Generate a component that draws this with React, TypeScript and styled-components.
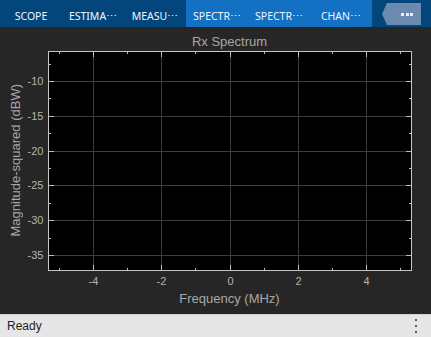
import React from 'react';
import styled, { createGlobalStyle } from 'styled-components';

const GlobalStyle = createGlobalStyle`
  html, body {
    margin: 0;
    padding: 0;
    height: 100%;
    background: #262626;
    overflow: hidden;
  }
  #root {
    height: 100%;
  }
`;

const Window = styled.div`
  display: flex;
  flex-direction: column;
  height: 100vh;
  width: 100vw;
  font-family: 'Liberation Sans', Arial, sans-serif;
`;

const Toolstrip = styled.div`
  display: flex;
  align-items: stretch;
  flex: 0 0 27px;
  background: #02467c;
`;

const TabGroup = styled.div<{ $active?: boolean }>`
  display: flex;
  background: ${(p) => (p.$active ? '#1370c3' : 'transparent')};
`;

const Tab = styled.div`
  width: 62px;
  box-sizing: border-box;
  padding-top: 5px;
  display: flex;
  align-items: center;
  justify-content: center;
  font-family: 'Noto Sans', 'Open Sans', sans-serif;
  font-size: 10.5px;
  color: #f2f6fa;
  white-space: nowrap;
`;

const OverflowButton = styled.button`
  align-self: flex-start;
  margin: 3px 10px 0 auto;
  width: 39px;
  height: 22px;
  border: 0;
  padding: 0 0 0 11px;
  background: #6a8bae;
  clip-path: polygon(0 50%, 5px 0, 100% 0, 100% 100%, 5px 100%);
  display: flex;
  align-items: center;
  justify-content: center;
  gap: 1.5px;
`;

const ButtonDot = styled.span`
  width: 3px;
  height: 3px;
  background: #e9eef4;
`;

const Figure = styled.main`
  flex: 1;
  display: flex;
  flex-direction: column;
  background: #262626;
  color: #a8a8a8;
  font-size: 13px;
`;

const Title = styled.div`
  height: 23px;
  box-sizing: border-box;
  padding: 0 20px 1px 48px;
  display: flex;
  align-items: flex-end;
  justify-content: center;
  line-height: 15px;
`;

const PlotRow = styled.div`
  display: flex;
  height: 240px;
`;

const YLabelCell = styled.div`
  width: 23px;
  box-sizing: border-box;
  padding: 1px 0 20px 0;
  display: flex;
  align-items: center;
  justify-content: flex-end;
`;

const YLabel = styled.div`
  writing-mode: vertical-rl;
  transform: rotate(180deg);
  line-height: 15px;
  white-space: nowrap;
`;

const Chart = styled.svg`
  display: block;
  font-family: 'Liberation Sans', Arial, sans-serif;
`;

const XLabel = styled.div`
  height: 24px;
  box-sizing: border-box;
  padding: 1px 20px 0 48px;
  display: flex;
  justify-content: center;
  line-height: 15px;
`;

const StatusBar = styled.footer`
  flex: 0 0 23px;
  box-sizing: border-box;
  border-top: 1px solid #d2d2d2;
  background: #e6e6e6;
  display: flex;
  align-items: center;
  justify-content: space-between;
  padding: 0 14px 0 7px;
  font-size: 12px;
  color: #1f1f1f;
`;

const MenuDots = styled.div`
  display: flex;
  flex-direction: column;
  gap: 3.5px;
`;

const MenuDot = styled.span`
  width: 2.5px;
  height: 2.5px;
  background: #5a5a5a;
`;

// axes geometry (svg-local pixels, svg sits at page x=23, y=50)
const LEFT = 25;
const RIGHT = 388;
const TOP = 1;
const BOTTOM = 220;

const xPos = (v: number) => Math.floor(207 + v * 34.15);
const yPos = (v: number) => Math.floor(31.5 + (-10 - v) * 6.96);

const xMajor = [-4, -2, 0, 2, 4];
const xMinor = [-5, -3, -1, 1, 3, 5];
const yMajor = [-10, -15, -20, -25, -30, -35];
const yMinor = [-7.5, -12.5, -17.5, -22.5, -27.5, -32.5];

const GRID = '#3d3d3d';
const TICK = '#bdbdbd';

const SpectrumAxes: React.FC = () => (
  <Chart width={408} height={240} viewBox="0 0 408 240">
    <rect x={LEFT} y={TOP} width={RIGHT - LEFT} height={BOTTOM - TOP} fill="#000" />
    {xMajor.map((v) => (
      <line key={`gx${v}`} x1={xPos(v) + 0.5} x2={xPos(v) + 0.5} y1={TOP} y2={BOTTOM} stroke={GRID} />
    ))}
    {yMajor.map((v) => (
      <line key={`gy${v}`} x1={LEFT} x2={RIGHT} y1={yPos(v) + 0.5} y2={yPos(v) + 0.5} stroke={GRID} />
    ))}
    {xMajor.concat(xMinor).map((v) => {
      const len = xMajor.includes(v) ? 6 : 3;
      const x = xPos(v) + 0.5;
      return (
        <g key={`tx${v}`} stroke={TICK}>
          <line x1={x} x2={x} y1={TOP} y2={TOP + len} />
          <line x1={x} x2={x} y1={BOTTOM + 1} y2={BOTTOM + 1 - len} />
        </g>
      );
    })}
    {yMajor.concat(yMinor).map((v) => {
      const len = yMajor.includes(v) ? 6 : 3;
      const y = yPos(v) + 0.5;
      return (
        <g key={`ty${v}`} stroke={TICK}>
          <line x1={LEFT} x2={LEFT + len} y1={y} y2={y} />
          <line x1={RIGHT + 1} x2={RIGHT + 1 - len} y1={y} y2={y} />
        </g>
      );
    })}
    <rect
      x={LEFT + 0.5}
      y={TOP + 0.5}
      width={RIGHT - LEFT}
      height={BOTTOM - TOP}
      fill="none"
      stroke="#c6c6c6"
    />
    {yMajor.map((v) => (
      <text key={`ly${v}`} x={20.5} y={yPos(v) + 4} textAnchor="end" fontSize={11} fill="#b4b4b4">
        {v}
      </text>
    ))}
    {xMajor.map((v) => (
      <text key={`lx${v}`} x={xPos(v) + 0.5} y={235} textAnchor="middle" fontSize={11} fill="#b4b4b4">
        {v}
      </text>
    ))}
  </Chart>
);

const tabs = [
  { label: 'SCOPE', group: 0 },
  { label: 'ESTIMA⋯', group: 0 },
  { label: 'MEASU⋯', group: 0 },
  { label: 'SPECTR⋯', group: 1 },
  { label: 'SPECTR⋯', group: 1 },
  { label: 'CHAN⋯', group: 1 },
];

export default function App() {
  return (
    <Window>
      <GlobalStyle />
      <Toolstrip>
        <TabGroup>
          {tabs
            .filter((t) => t.group === 0)
            .map((t, i) => (
              <Tab key={i}>{t.label}</Tab>
            ))}
        </TabGroup>
        <TabGroup $active>
          {tabs
            .filter((t) => t.group === 1)
            .map((t, i) => (
              <Tab key={i}>{t.label}</Tab>
            ))}
        </TabGroup>
        <OverflowButton aria-label="More">
          <ButtonDot />
          <ButtonDot />
          <ButtonDot />
        </OverflowButton>
      </Toolstrip>
      <Figure>
        <Title>Rx Spectrum</Title>
        <PlotRow>
          <YLabelCell>
            <YLabel>Magnitude-squared (dBW)</YLabel>
          </YLabelCell>
          <SpectrumAxes />
        </PlotRow>
        <XLabel>Frequency (MHz)</XLabel>
      </Figure>
      <StatusBar>
        <span>Ready</span>
        <MenuDots>
          <MenuDot />
          <MenuDot />
          <MenuDot />
        </MenuDots>
      </StatusBar>
    </Window>
  );
}
